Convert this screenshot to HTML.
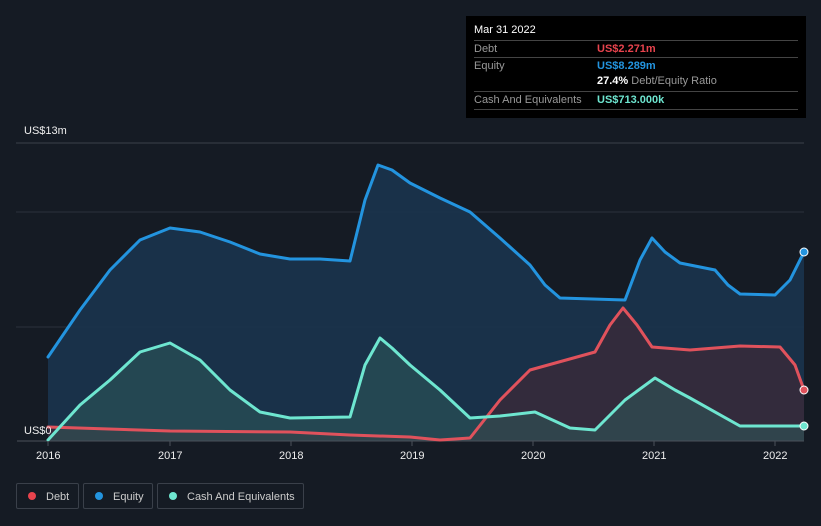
<!DOCTYPE html>
<html><head><style>
body{margin:0;background:#151b24;width:821px;height:526px;overflow:hidden;font-family:"Liberation Sans",sans-serif;position:relative}
.tt{position:absolute;left:466px;top:16px;width:340px;height:102px;background:#000;color:#fff;font-size:11px}
.tt .r{position:absolute;left:8px;right:8px;border-top:1px solid #444;height:17px;line-height:17px;color:#999}
.leg{position:absolute;top:483px;height:26px;border:1px solid #3a404a;border-radius:2px;color:#ccc;font-size:11px;line-height:26px;box-sizing:border-box}
.dot{display:inline-block;width:8px;height:8px;border-radius:50%;margin:0 10px 0 11px;vertical-align:-0px}
.ax{position:absolute;top:450px;color:#eee;font-size:11px}
</style></head><body>
<svg width="821" height="526" style="position:absolute;left:0;top:0">
<line x1="16" y1="143" x2="804" y2="143" stroke="#3a404a"/>
<line x1="16" y1="212" x2="804" y2="212" stroke="#2a313b"/>
<line x1="16" y1="327" x2="804" y2="327" stroke="#2a313b"/>
<polygon fill="#1a3550" opacity="0.85" points="48,357 80,310 110,270 140,240 170,228 200,232 230,242 260,254 290,259 320,259 350,261 365,200 378,165 392,170 410,183 440,198 470,212 500,238 530,265 545,285 560,298 625,300 640,260 652,238 665,252 680,263 715,270 728,285 740,294 775,295 790,280 804,252 804,441 48,441"/>
<polygon fill="#3a2a3a" opacity="0.8" points="48,427 170,431 290,432 350,435 410,437 440,440 470,438 500,400 530,370 595,352 610,325 623,308 637,325 652,347 690,350 740,346 780,347 795,365 804,390 804,441 48,441"/>
<polygon fill="#2e5a5a" opacity="0.55" points="48,440 80,405 110,380 140,352 170,343 200,360 230,390 260,412 290,418 350,417 365,365 380,338 392,348 410,365 440,390 470,418 500,416 535,412 570,428 595,430 610,415 625,400 655,378 675,390 690,398 740,426 804,426 804,441 48,441"/>
<line x1="17" y1="441" x2="804" y2="441" stroke="#4a505a"/>
<g fill="none" stroke-width="3" stroke-linejoin="round" stroke-linecap="round">
<polyline stroke="#2394df" points="48,357 80,310 110,270 140,240 170,228 200,232 230,242 260,254 290,259 320,259 350,261 365,200 378,165 392,170 410,183 440,198 470,212 500,238 530,265 545,285 560,298 625,300 640,260 652,238 665,252 680,263 715,270 728,285 740,294 775,295 790,280 804,252"/>
<polyline stroke="#e0525c" points="48,427 170,431 290,432 350,435 410,437 440,440 470,438 500,400 530,370 595,352 610,325 623,308 637,325 652,347 690,350 740,346 780,347 795,365 804,390"/>
<polyline stroke="#6ee6d0" points="48,440 80,405 110,380 140,352 170,343 200,360 230,390 260,412 290,418 350,417 365,365 380,338 392,348 410,365 440,390 470,418 500,416 535,412 570,428 595,430 610,415 625,400 655,378 675,390 690,398 740,426 804,426"/>
</g>
<circle cx="804" cy="252" r="4" fill="#2394df" stroke="#fff" stroke-width="1"/>
<circle cx="804" cy="390" r="4" fill="#e0525c" stroke="#fff" stroke-width="1"/>
<circle cx="804" cy="426" r="4" fill="#6ee6d0" stroke="#fff" stroke-width="1"/>
<g stroke="#4a505a"><line x1="48" y1="441" x2="48" y2="446"/><line x1="170" y1="441" x2="170" y2="446"/><line x1="291" y1="441" x2="291" y2="446"/><line x1="412" y1="441" x2="412" y2="446"/><line x1="533" y1="441" x2="533" y2="446"/><line x1="654" y1="441" x2="654" y2="446"/><line x1="775" y1="441" x2="775" y2="446"/></g>
</svg>
<div style="position:absolute;left:24px;top:125px;color:#eee;font-size:11px">US$13m</div>
<div style="position:absolute;left:24px;top:425px;color:#eee;font-size:11px">US$0</div>
<div class="ax" style="left:36px">2016</div><div class="ax" style="left:158px">2017</div><div class="ax" style="left:279px">2018</div><div class="ax" style="left:400px">2019</div><div class="ax" style="left:521px">2020</div><div class="ax" style="left:642px">2021</div><div class="ax" style="left:763px">2022</div>
<div class="tt">
<div style="position:absolute;left:8px;top:8px;font-size:11px">Mar 31 2022</div>
<div class="r" style="top:24px">Debt<span style="position:absolute;left:123px;color:#e8434d;font-weight:bold">US$2.271m</span></div>
<div class="r" style="top:41px">Equity<span style="position:absolute;left:123px;color:#2394df;font-weight:bold">US$8.289m</span></div>
<div style="position:absolute;left:131px;top:59px;color:#999"><b style="color:#fff">27.4%</b> Debt/Equity Ratio</div>
<div class="r" style="top:75px;border-bottom:1px solid #444">Cash And Equivalents<span style="position:absolute;left:123px;color:#6ee6d0;font-weight:bold">US$713.000k</span></div>
</div>
<div class="leg" style="left:16px;width:63px"><span class="dot" style="background:#e8434d"></span>Debt</div>
<div class="leg" style="left:83px;width:70px"><span class="dot" style="background:#2394df"></span>Equity</div>
<div class="leg" style="left:157px;width:147px"><span class="dot" style="background:#6ee6d0"></span>Cash And Equivalents</div>
</body></html>
